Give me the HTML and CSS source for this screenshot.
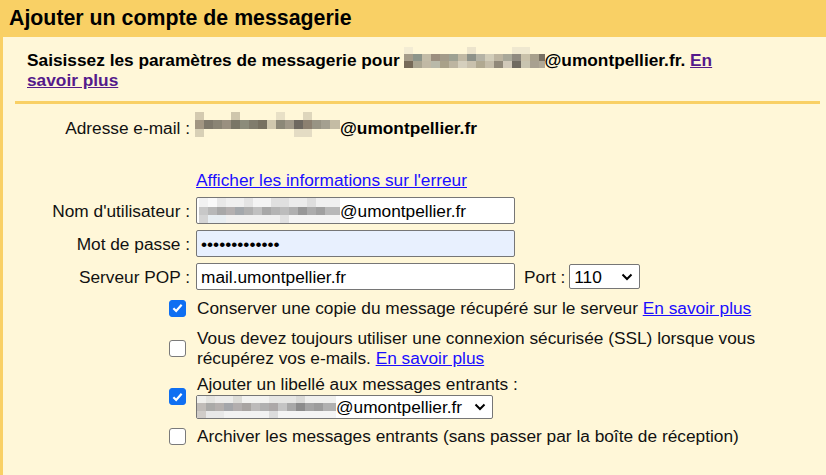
FILE: index.html
```html
<!DOCTYPE html>
<html lang="fr">
<head>
<meta charset="utf-8">
<title>Ajouter un compte de messagerie</title>
<link rel="stylesheet" href="styles.css">
</head>
<body>
<div class="title">Ajouter un compte de messagerie</div>
<div class="panel">
  <p class="intro">Saisissez les paramètres de messagerie pour <span class="mosaic m-intro"></span>@umontpellier.fr. <a class="visited" href="#">En savoir plus</a></p>
  <div class="divider"></div>
  <div class="form">
    <div class="label">Adresse e-mail :</div>
    <div class="value email"><span class="mosaic m-email"></span>@umontpellier.fr</div>

    <div class="label spacer"></div>
    <div class="value spacer"><a class="link" href="#">Afficher les informations sur l'erreur</a></div>

    <div class="label">Nom d'utilisateur :</div>
    <div class="value"><div class="field"><span class="mosaic m-user"></span>@umontpellier.fr</div></div>

    <div class="label">Mot de passe :</div>
    <div class="value"><div class="field autofill">•••••••••••••</div></div>

    <div class="label">Serveur POP :</div>
    <div class="value pop">
      <div class="field">mail.umontpellier.fr</div>
      <span class="port-label">Port :</span>
      <div class="select port">
        <span>110</span>
        <svg class="chev" width="12" height="8" viewBox="0 0 12 8"><path d="M1.5 1.5 L6 6 L10.5 1.5" fill="none" stroke="#000" stroke-width="2"/></svg>
      </div>
    </div>
  </div>

  <div class="options">
    <div class="opt r1">
      <span class="cb on"><svg width="16" height="16" viewBox="0 0 16 16"><path d="M3.6 8.2 L6.6 11.2 L12.4 4.6" fill="none" stroke="#fff" stroke-width="2.3"/></svg></span>
      <div class="opt-text">Conserver une copie du message récupéré sur le serveur <a class="link" href="#">En savoir plus</a></div>
    </div>
    <div class="opt r2">
      <span class="cb"></span>
      <div class="opt-text">Vous devez toujours utiliser une connexion sécurisée (SSL) lorsque vous récupérez vos e-mails. <a class="link" href="#">En savoir plus</a></div>
    </div>
    <div class="opt r3">
      <span class="cb on"><svg width="16" height="16" viewBox="0 0 16 16"><path d="M3.6 8.2 L6.6 11.2 L12.4 4.6" fill="none" stroke="#fff" stroke-width="2.3"/></svg></span>
      <div class="opt-text">Ajouter un libellé aux messages entrants :
        <div class="select labelsel">
          <span class="mosaic m-label"></span><span>@umontpellier.fr</span>
          <svg class="chev" width="12" height="8" viewBox="0 0 12 8"><path d="M1.5 1.5 L6 6 L10.5 1.5" fill="none" stroke="#000" stroke-width="2"/></svg>
        </div>
      </div>
    </div>
    <div class="opt r4">
      <span class="cb"></span>
      <div class="opt-text">Archiver les messages entrants (sans passer par la boîte de réception)</div>
    </div>
  </div>
</div>
</body>
</html>
```

FILE: styles.css
```css
html, body {
  margin: 0;
  padding: 0;
  background: #fff7d8;
}
body {
  font-family: "Liberation Sans", Arial, sans-serif;
  font-size: 17.3px;
  color: #111;
}
.title {
  background: #f9d065;
  height: 37px;
  line-height: 37px;
  padding-left: 9px;
  font-size: 21.33px;
  font-weight: bold;
  color: #000;
}
.panel {
  border-left: 3px solid #f9d065;
  min-height: 438px;
  box-sizing: border-box;
  padding-top: 13px;
}
.intro {
  margin: 0 0 0 24px;
  width: 700px;
  font-weight: bold;
  color: #000;
  line-height: 20px;
}
.visited {
  color: #551a8b;
  text-decoration: underline;
}
.link {
  color: #1a0dff;
  text-decoration: underline;
}
.divider {
  height: 3px;
  background: #f9d065;
  margin: 11px 6px 0 12px;
}
.mosaic {
  display: inline-block;
}
.m-intro {
  width: 141px;
  height: 21px;
  vertical-align: -2px;
  margin-top: -5px;
  margin-left: -1px;
  background:
    linear-gradient(to right, #f3ecd4 0 9px, #fff7d8 9px 63px, #ece4cc 63px 72px, #fff7d8 72px 108px, #efe8d0 108px 126px, #fff7d8 126px) 0 0 / 100% 7px no-repeat,
    linear-gradient(to right, #a59c8a 0 9px, #8d958a 9px 18px, #c3bca7 18px 27px, #9c8f7f 27px 36px, #a39b89 36px 45px, #9ea192 45px 54px, #c1b9a4 54px 63px, #8e9289 63px 72px, #b5b3a5 72px 81px, #d2cdb9 81px 90px, #bdb5a1 90px 99px, #a9a899 99px 108px, #8f8a80 108px 117px, #c9c1aa 117px 126px, #a8a08c 126px 135px, #787062 135px) 0 7px / 100% 7px no-repeat,
    linear-gradient(to right, #766a58 0 9px, #aaa591 9px 18px, #c1b9a5 18px 27px, #b9b9a9 27px 36px, #a9a189 36px 45px, #bdb5a1 45px 54px, #d5cfbd 54px 63px, #c9c1ad 63px 72px, #b1a991 72px 81px, #c5bda9 81px 90px, #918979 90px 99px, #d1c9b9 99px 108px, #6f6a60 108px 117px, #c8c4b0 117px 126px, #a8a090 126px 135px, #b0a896 135px) 0 14px / 100% 7px no-repeat;
}
.m-email {
  width: 145px;
  height: 25px;
  vertical-align: -7px;
  margin-top: -8px;
  margin-left: -1px;
  background:
    linear-gradient(to right, #d4cab0 0 9px, #fff7d8 9px 36px, #cfc6ac 36px 45px, #fff7d8 45px 81px, #e8e0c6 81px 90px, #fff7d8 90px 108px, #ded6bc 108px 117px, #fff7d8 117px) 0 0 / 100% 8px no-repeat,
    linear-gradient(to right, #a29682 0 9px, #7e786a 9px 18px, #8a8474 18px 27px, #9a9080 27px 36px, #7a7666 36px 45px, #8c8c7a 45px 54px, #807c6c 54px 63px, #767060 63px 72px, #d0c8ae 72px 81px, #8c8878 81px 90px, #a09888 90px 99px, #6e6860 99px 108px, #8c8070 108px 117px, #989484 117px 126px, #a4a090 126px 135px, #c4bca4 135px) 0 8px / 100% 9px no-repeat,
    linear-gradient(to right, #d8d0b6 0 9px, #fff7d8 9px 99px, #e4dcc4 99px 117px, #fff7d8 117px) 0 17px / 100% 8px no-repeat;
}
.m-user {
  width: 141px;
  height: 25px;
  background:
    linear-gradient(to right, #f2f2f2 0 9px, #fafafa 9px 18px, #e8e8e8 18px 27px, #f0f0f0 27px 45px, #e4e4e4 45px 54px, #f4f4f4 54px 72px, #e0e0e0 72px 90px, #ececec 90px 108px, #dedede 108px 117px, #f0f0f0 117px) 0 0 / 100% 9px no-repeat,
    linear-gradient(to right, #c8c8c8 0 9px, #b8b8b8 9px 18px, #a8a8a8 18px 27px, #b4b0b0 27px 36px, #a4a8ac 36px 45px, #b0b0b0 45px 54px, #c0c0c0 54px 63px, #a8a8a8 63px 72px, #b4b4b4 72px 81px, #bcbcbc 81px 90px, #b0b0b0 90px 99px, #989898 99px 108px, #acacac 108px 117px, #a0a0a0 117px 126px, #b8b8b8 126px) 0 9px / 100% 8px no-repeat,
    linear-gradient(to right, #d4d4d4 0 9px, #e8eef2 9px 27px, #f0f0f0 27px 81px, #e0e0e0 81px 90px, #f4f4f4 90px) 0 17px / 100% 8px no-repeat;
}
.m-label {
  width: 139px;
  height: 22px;
  background:
    linear-gradient(to right, #f0f0ec 0 9px, #e4e4e0 9px 18px, #ececea 18px 36px, #dcdcd8 36px 45px, #f2f2f0 45px 72px, #e6e6e4 72px 99px, #dadad8 99px 108px, #f0f0ee 108px) 0 0 / 100% 7px no-repeat,
    linear-gradient(to right, #c0bcb8 0 9px, #aaaaa8 9px 18px, #b4b0ae 18px 27px, #a4a6aa 27px 36px, #b2aeae 36px 45px, #a8a4a2 45px 54px, #bcbaba 54px 63px, #b0b0b0 63px 72px, #aca8a8 72px 81px, #c4c4c4 81px 90px, #a8a8a8 90px 99px, #8c8c8c 99px 108px, #a4a4a4 108px 117px, #9c9c9c 117px 126px, #b0b0b0 126px) 0 7px / 100% 8px no-repeat,
    linear-gradient(to right, #d0ccc8 0 9px, #e8e8e8 9px 27px, #f2f2f2 27px 72px, #dcdcdc 72px 81px, #f4f4f4 81px) 0 15px / 100% 7px no-repeat;
}
.form {
  display: grid;
  grid-template-columns: 187px auto;
  column-gap: 6px;
  row-gap: 6px;
  align-items: center;
  margin-top: 14px;
  line-height: 20px;
}
.label {
  text-align: right;
  white-space: nowrap;
}
.value {
  display: flex;
  align-items: center;
  white-space: nowrap;
}
.email {
  font-weight: bold;
  color: #000;
}
.spacer {
  margin-top: 26px;
  margin-bottom: 1px;
}
.field {
  box-sizing: border-box;
  width: 319px;
  height: 27px;
  border: 1px solid #767676;
  border-radius: 2px;
  background: #fff;
  display: flex;
  align-items: center;
  padding-left: 4px;
  color: #000;
  overflow: hidden;
}
.field .m-user {
  margin-left: -2px;
}
.autofill {
  background: #e8f0fe;
}
.port-label {
  margin-left: 9px;
  margin-right: 4px;
}
.select {
  box-sizing: border-box;
  height: 25px;
  border: 1px solid #767676;
  border-radius: 2px;
  background: #fff;
  display: flex;
  align-items: center;
  color: #000;
  position: relative;
}
.port {
  width: 71px;
  padding-left: 4px;
}
.chev {
  position: absolute;
  right: 6px;
  top: 8px;
}
.options {
  margin-left: 166px;
  margin-top: 8px;
  line-height: 20px;
}
.opt {
  display: flex;
  align-items: center;
}
.cb {
  box-sizing: border-box;
  width: 17px;
  height: 17px;
  flex: none;
  margin-right: 11px;
  border: 1.5px solid #7a7a7a;
  border-radius: 3px;
  background: #fff;
  display: flex;
  align-items: center;
  justify-content: center;
}
.cb.on {
  background: #0f6ff2;
  border-color: #0f6ff2;
}
.opt-text {
  width: 565px;
}
.r2 { margin-top: 10px; }
.r3 { margin-top: 6px; }
.r4 { margin-top: 7px; }
.labelsel {
  width: 297px;
  height: 24px;
  margin-left: -1px;
  margin-top: 1px;
}
.labelsel .chev {
  top: 7px;
}
```
